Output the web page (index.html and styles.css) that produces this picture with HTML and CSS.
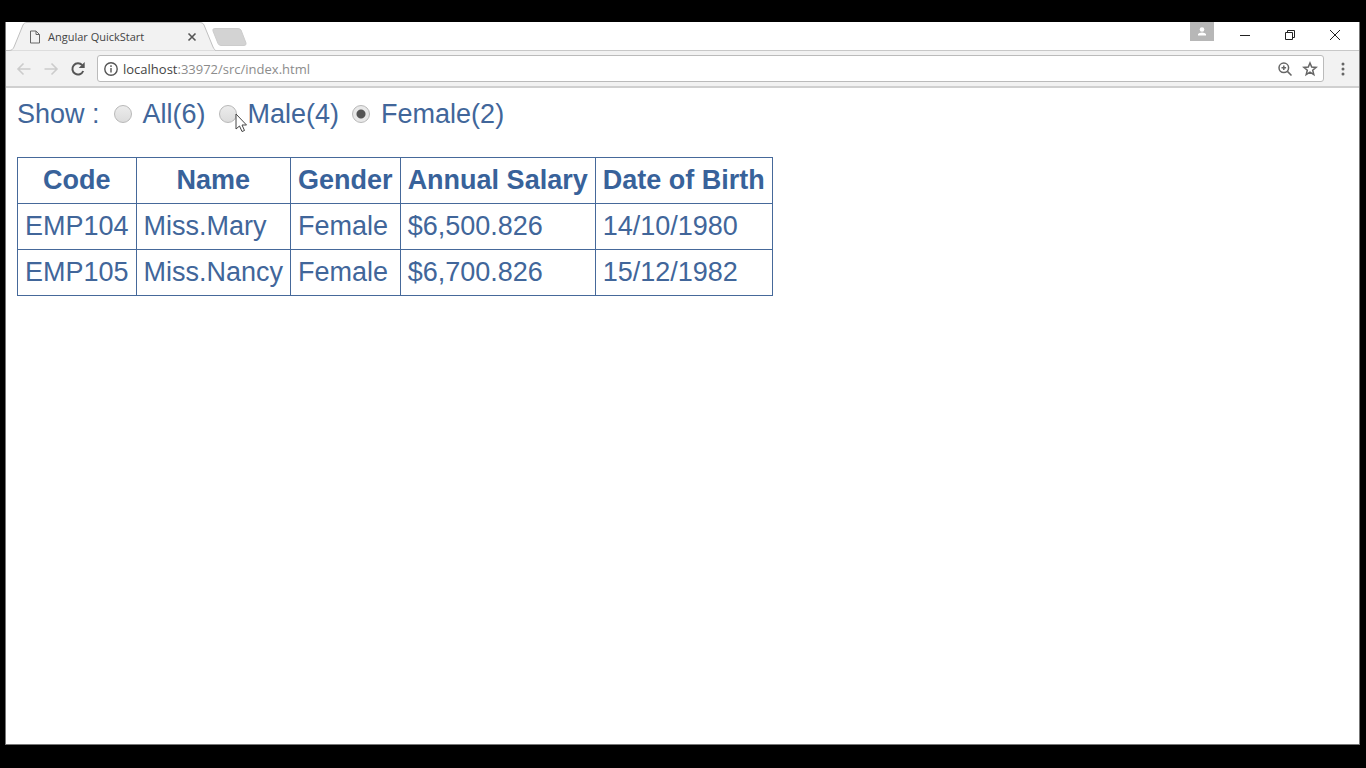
FILE: index.html
```html
<!DOCTYPE html>
<html lang="en">
<head>
<meta charset="utf-8">
<title>Angular QuickStart</title>
<link rel="stylesheet" href="styles.css">
</head>
<body>
<div class="window">
  <header class="tab-strip">
    <div class="tab">
      <svg class="tab-shape" viewBox="0 0 210 29" aria-hidden="true"><path d="M0 28.500H3C6 28.500 7 27 8 25L17 3C18 1 19 .5 21 .5H193C196 .5 197 1 198 3L207 25C208 27 209 28.500 210 28.500"/></svg>
      <svg class="file-icon" viewBox="0 0 12 14" aria-hidden="true"><path d="M1.500 1H7L10.500 4.500V13H1.500ZM7 1V4.500H10.500"/></svg>
      <span class="tab-title">Angular QuickStart</span>
      <button class="tab-close" aria-label="Close tab"><svg viewBox="0 0 10 10"><path d="M1.500 1.500L8.500 8.500M8.500 1.500L1.500 8.500"/></svg></button>
    </div>
    <button class="new-tab" aria-label="New tab"><svg viewBox="0 0 35 18"><path d="M3 .5H26Q28 .5 29 2L34 15Q34.500 17.500 32 17.500H9Q7 17.500 6 15.500L1 3Q0 .5 3 .5Z"/></svg></button>
    <div class="window-controls">
      <button class="profile" aria-label="Profile"><svg viewBox="0 0 12 12"><circle cx="6" cy="3.500" r="2.300"/><path d="M2 9.500V8Q3 6.500 6 6.500T10 8V9.500Z"/></svg></button>
      <button class="control" aria-label="Minimize"><svg viewBox="0 0 12 12"><path d="M1 6.500H11"/></svg></button>
      <button class="control" aria-label="Restore"><svg viewBox="0 0 12 12"><path d="M1.500 3.500H8.500V10.500H1.500ZM3.500 3.500V1.500H10.500V8.500H8.500"/></svg></button>
      <button class="control" aria-label="Close"><svg viewBox="0 0 12 12"><path d="M1 1L11 11M11 1L1 11"/></svg></button>
    </div>
  </header>
  <nav class="toolbar">
    <button class="nav-button muted" aria-label="Back"><svg viewBox="0 0 16 16"><path d="M14.500 8H2M7.500 2.500L2 8L7.500 13.500"/></svg></button>
    <button class="nav-button muted" aria-label="Forward"><svg viewBox="0 0 16 16"><path d="M1.500 8H14M8.500 2.500L14 8L8.500 13.500"/></svg></button>
    <button class="nav-button reload" aria-label="Reload"><svg viewBox="0 0 16 16"><path d="M13.200 10A5.600 5.600 0 1 1 12.200 4.200"/><path class="solid" d="M14.700 1V7H8.700Z"/></svg></button>
    <div class="address">
      <svg class="address-icon" viewBox="0 0 16 16" aria-hidden="true"><circle cx="8" cy="8" r="6.200"/><path d="M8 7V11.500M8 4.300V5.900"/></svg>
      <a class="url" href="#"><span class="host">localhost</span>:33972/src/index.html</a>
      <button class="address-button" aria-label="Zoom"><svg viewBox="0 0 16 16"><circle cx="6.800" cy="6.800" r="4.800"/><path d="M10.400 10.400L14.500 14.500M4.500 6.800H9.100M6.800 4.500V9.100"/></svg></button>
      <button class="address-button" aria-label="Bookmark"><svg viewBox="0 0 16 16"><path d="M8 2L9.700 6.100L14.100 6.400L10.700 9.200L11.800 13.600L8 11.200L4.200 13.600L5.300 9.200L1.900 6.400L6.300 6.100Z"/></svg></button>
    </div>
    <button class="menu" aria-label="Menu"><svg viewBox="0 0 4 14"><circle cx="2" cy="2" r="1.500"/><circle cx="2" cy="7" r="1.500"/><circle cx="2" cy="12" r="1.500"/></svg></button>
  </nav>
  <main class="page">
    <div class="filters">
      <span class="filter-title">Show :</span>
      <label class="option"><input type="radio" name="gender">All(6)</label>
      <label class="option"><input type="radio" name="gender">Male(4)<svg class="pointer" viewBox="0 0 13 20" aria-hidden="true"><path d="M1 1V16L4.500 13L7 18.500L9.500 17.500L7 12H11.500Z"/></svg></label>
      <label class="option"><input type="radio" name="gender" checked>Female(2)</label>
    </div>
    <table class="employees">
      <thead><tr><th>Code</th><th>Name</th><th>Gender</th><th>Annual Salary</th><th>Date of Birth</th></tr></thead>
      <tbody>
        <tr><td>EMP104</td><td>Miss.Mary</td><td>Female</td><td>$6,500.826</td><td>14/10/1980</td></tr>
        <tr><td>EMP105</td><td>Miss.Nancy</td><td>Female</td><td>$6,700.826</td><td>15/12/1982</td></tr>
      </tbody>
    </table>
  </main>
</div>
</body>
</html>
```
FILE: styles.css
```css
* { box-sizing: border-box; }
body {
  margin: 0;
  min-height: 100vh;
  padding: 22px 6px 23px 5px;
  display: flex;
  background: #000;
  font-family: "Open Sans", "Noto Sans", sans-serif;
}
svg { display: block; fill: none; stroke: currentColor; }
button {
  display: flex;
  align-items: center;
  justify-content: center;
  padding: 0;
  border: 0;
  background: none;
  color: inherit;
}
.window {
  flex: 1;
  display: flex;
  flex-direction: column;
  background: #fff;
  border: solid #777;
  border-width: 0 1px 1px;
}
.tab-strip {
  height: 29px;
  display: flex;
  align-items: flex-start;
  color: #444;
  box-shadow: inset 0 -1px #c8c8c8;
}
.tab {
  position: relative;
  width: 210px;
  height: 29px;
  display: flex;
  align-items: center;
  padding: 0 18px 0 23px;
}
.tab-shape {
  position: absolute;
  inset: 0;
  width: 210px;
  height: 29px;
  fill: #f2f2f2;
  stroke: #c0c0c0;
}
.file-icon { position: relative; width: 12px; height: 14px; stroke: #666; }
.tab-title { position: relative; flex: 1; margin-left: 7px; font-size: 11px; }
.tab-close { position: relative; width: 12px; height: 12px; color: #555; }
.tab-close svg { width: 10px; height: 10px; stroke-width: 1.6; }
.new-tab { width: 35px; height: 18px; margin: 6px 0 0 -4px; color: #ccc; }
.new-tab svg { width: 35px; height: 18px; fill: #d3d3d3; }
.window-controls { margin-left: auto; display: flex; }
.profile { width: 24px; height: 19px; margin-right: 8px; background: #b7b7b7; color: #fff; }
.profile svg { width: 12px; height: 12px; fill: #fff; stroke: none; }
.control { width: 45px; height: 26px; color: #222; }
.control:last-child { margin-right: 2px; }
.control svg { width: 12px; height: 12px; }
.toolbar {
  height: 37px;
  display: flex;
  align-items: center;
  padding: 0 14px 0 10px;
  background: #f2f2f2;
  border-bottom: 2px solid #d0d0d0;
}
.nav-button { width: 16px; height: 16px; margin-right: 11px; color: #555; }
.nav-button svg { width: 16px; height: 16px; stroke-width: 1.6; }
.nav-button.reload svg { stroke-width: 2; }
.muted { color: #ccc; }
.solid { fill: currentColor; stroke: none; }
.address {
  flex: 1;
  height: 27px;
  display: flex;
  align-items: center;
  padding: 0 5px;
  background: #fff;
  border: 1px solid #bbb;
  border-radius: 3px;
}
.address-icon { width: 16px; height: 16px; color: #555; stroke-width: 1.4; }
.url { flex: 1; margin-left: 4px; font-size: 13px; color: #8c8c8c; text-decoration: none; }
.host { color: #444; }
.address-button { width: 16px; height: 16px; margin-left: 9px; color: #666; }
.address-button svg { width: 16px; height: 16px; stroke-width: 1.5; }
.menu { width: 4px; height: 14px; margin-left: 17px; color: #666; }
.menu svg { width: 4px; height: 14px; fill: currentColor; stroke: none; }
.page {
  flex: 1;
  padding: 10px 11px;
  color: #41669a;
  font: 27px/32px "Liberation Sans", Arial, sans-serif;
}
.filters { display: flex; align-items: center; margin-bottom: 27px; }
.filter-title { margin-right: 14px; }
.option { position: relative; display: flex; align-items: center; margin-right: 13px; }
.option input {
  appearance: none;
  width: 18px;
  height: 18px;
  margin: 0 11px 0 0;
  border: 1px solid #b8b8b8;
  border-radius: 50%;
  background: linear-gradient(#ececec, #dcdcdc);
}
.option input:checked { background: radial-gradient(circle, #555 4px, #e8e8e8 5px); }
.pointer {
  position: absolute;
  left: 16px;
  top: 15px;
  width: 13px;
  height: 20px;
  fill: #fff;
  stroke: #444;
}
.employees { border-collapse: collapse; }
.employees th, .employees td {
  height: 46px;
  padding: 0 7px 2px;
  border: 1px solid #46699a;
  text-align: left;
}
.employees th { text-align: center; color: #38629a; }
```
